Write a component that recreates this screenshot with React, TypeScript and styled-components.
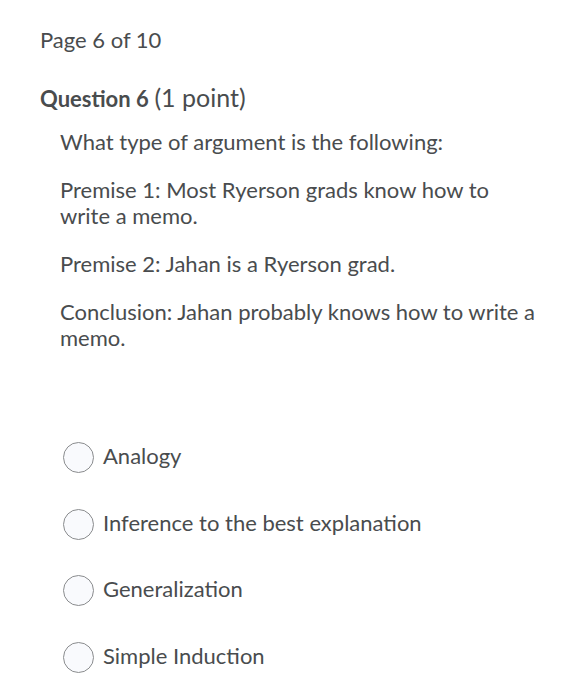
import React from "react";
import styled, { createGlobalStyle } from "styled-components";

const GlobalStyle = createGlobalStyle`
  body {
    margin: 0;
    background: #ffffff;
    font-family: "Lato", "Liberation Sans", sans-serif;
    color: #494c4e;
  }
`;

const Page = styled.main`
  padding: 27px 36px 0 40px;
`;

const PageLabel = styled.div`
  font-size: 22px;
  line-height: 26px;
`;

const QuestionTitle = styled.h2`
  margin: 32px 0 0 0;
  font-size: 22px;
  line-height: 26px;
  font-weight: 400;

  strong {
    font-weight: 700;
  }
`;

const Points = styled.span`
  font-size: 25px;
  line-height: 1;
`;

const Body = styled.div`
  padding-left: 20px;
  margin-top: 17px;
  font-size: 22px;
  line-height: 26px;
`;

const Para = styled.p`
  margin: 0 0 22px 0;
`;

const Options = styled.div`
  display: flex;
  flex-direction: column;
  gap: 35.6px;
  margin-top: 91px;
  padding-left: 3px;
`;

const Option = styled.label`
  display: flex;
  align-items: center;
  gap: 9px;
`;

const OptionText = styled.span`
  margin-bottom: 3px;
`;

const Radio = styled.span`
  box-sizing: border-box;
  width: 31px;
  height: 31px;
  border-radius: 50%;
  border: 1.5px solid #8a8c8e;
  background: #f9fafd;
  flex-shrink: 0;
`;

const options = [
  "Analogy",
  "Inference to the best explanation",
  "Generalization",
  "Simple Induction",
];

export default function App() {
  return (
    <>
      <GlobalStyle />
      <Page>
        <PageLabel>Page 6 of 10</PageLabel>
        <QuestionTitle>
          <strong>Question 6</strong> <Points>(1 point)</Points>
        </QuestionTitle>
        <Body>
          <Para>What type of argument is the following:</Para>
          <Para>Premise 1: Most Ryerson grads know how to write a memo.</Para>
          <Para>Premise 2: Jahan is a Ryerson grad.</Para>
          <Para>Conclusion: Jahan probably knows how to write a memo.</Para>
          <Options>
            {options.map((o) => (
              <Option key={o}>
                <Radio />
                <OptionText>{o}</OptionText>
              </Option>
            ))}
          </Options>
        </Body>
      </Page>
    </>
  );
}
